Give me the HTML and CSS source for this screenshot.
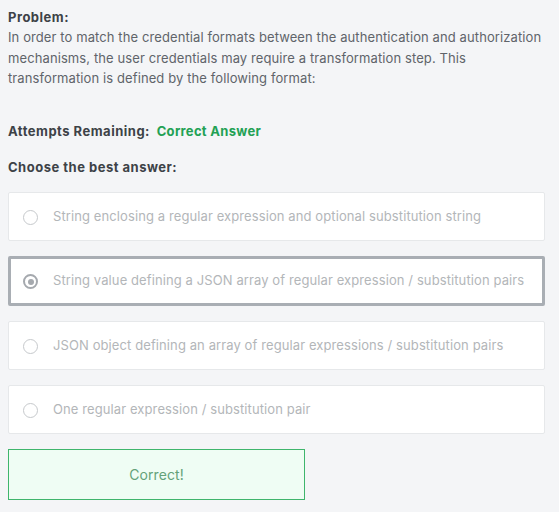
FILE: index.html
```html
<!DOCTYPE html>
<html>
<head>
<meta charset="utf-8">
<link rel="stylesheet" href="styles.css">
</head>
<body>
<div class="page">
  <div class="problem">
    <div class="label">Problem:</div>
    <p class="text">In order to match the credential formats between the authentication and authorization mechanisms, the user credentials may require a transformation step. This transformation is defined by the following format:</p>
  </div>
  <div class="attempts"><span class="label">Attempts Remaining:</span> <span class="status">Correct Answer</span></div>
  <div class="choose label">Choose the best answer:</div>
  <div class="options">
    <div class="option"><span class="radio"></span><span class="opt-text">String enclosing a regular expression and optional substitution string</span></div>
    <div class="option selected"><span class="radio"></span><span class="opt-text">String value defining a JSON array of regular expression / substitution pairs</span></div>
    <div class="option"><span class="radio"></span><span class="opt-text">JSON object defining an array of regular expressions / substitution pairs</span></div>
    <div class="option"><span class="radio"></span><span class="opt-text">One regular expression / substitution pair</span></div>
  </div>
  <div class="result">Correct!</div>
</div>
</body>
</html>
```
FILE: styles.css
```css
html, body {
  margin: 0;
  padding: 0;
  background: #f4f5f7;
}
body {
  font-family: Inter, "Open Sans", sans-serif;
  font-size: 13px;
  letter-spacing: 0.1px;
  color: #55595e;
}
.page {
  padding: 7px 14px 0 8px;
  display: flex;
  flex-direction: column;
}
.label {
  font-weight: 700;
  color: #3d4247;
  letter-spacing: 0.5px;
}
.problem .label {
  line-height: 20px;
}
.text {
  margin: 0;
  line-height: 20.5px;
  color: #60646a;
}
.attempts {
  margin-top: 32px;
  line-height: 20px;
}
.status {
  font-weight: 700;
  color: #22a154;
  margin-left: 3px;
  letter-spacing: 0.3px;
}
.choose {
  margin-top: 16px;
  line-height: 20px;
}
.options {
  margin-top: 15px;
  display: flex;
  flex-direction: column;
  gap: 15px;
}
.option {
  height: 47px;
  background: #fff;
  border: 1px solid #e6e8ea;
  border-radius: 2px;
  display: flex;
  align-items: center;
  padding-left: 14px;
}
.option.selected {
  height: 44px;
  border: 3px solid #a9aeb4;
  padding-left: 12px;
}
.radio {
  width: 15px;
  height: 15px;
  border: 1px solid #c6c9cc;
  border-radius: 50%;
  box-sizing: border-box;
  margin-right: 15px;
  margin-top: 2px;
  flex: none;
  position: relative;
}
.selected .radio {
  border: 2px solid #a5a9ae;
}
.selected .radio::after {
  content: "";
  position: absolute;
  left: 2.5px;
  top: 2.5px;
  width: 6px;
  height: 6px;
  border-radius: 50%;
  background: #a5a9ae;
}
.opt-text {
  color: #b3b6b9;
  letter-spacing: 0.1px;
  margin-top: -1px;
}
.result {
  margin-top: 15px;
  width: 295px;
  height: 49px;
  border: 1px solid #3fb56c;
  background: #effdf4;
  color: #64a279;
  font-size: 14px;
  display: flex;
  align-items: center;
  justify-content: center;
}
```
